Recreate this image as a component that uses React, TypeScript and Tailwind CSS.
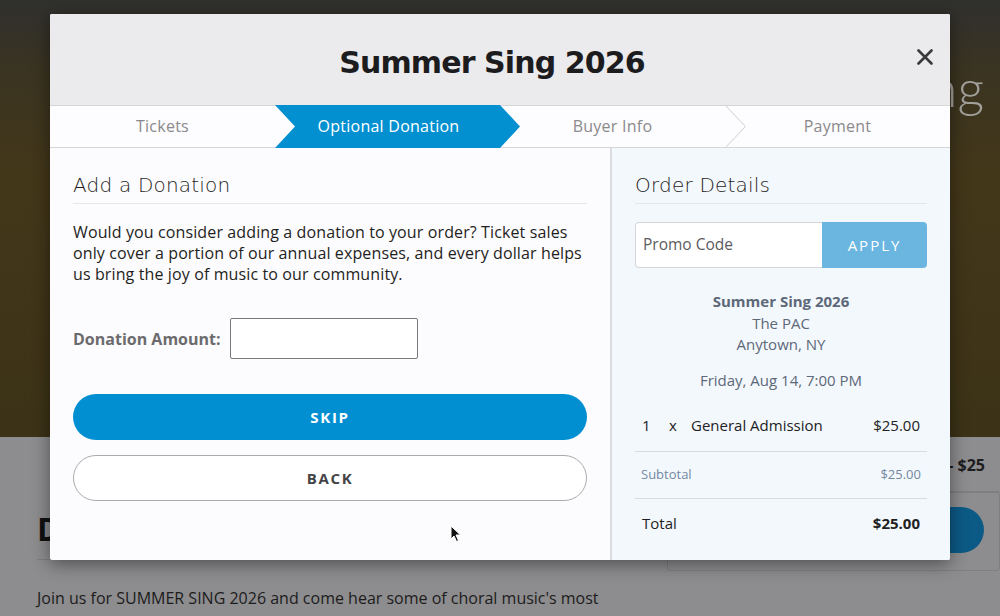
import React from "react";

const os = { fontFamily: '"Open Sans", "Noto Sans", sans-serif' };
const mont = { fontFamily: '"DejaVu Sans", "Noto Sans", sans-serif' };

function Steps() {
  return (
    <div className="relative flex h-[43px] border-y border-[#d6d6d8] bg-[#fdfcfe] text-[16px] tracking-[0.25px] text-[#8a8a8c]" style={os}>
      <div className="flex w-[225px] items-center justify-center pb-[1px]">Tickets</div>
      <div className="relative w-[225px]">
        <div
          className="absolute inset-y-[-1px] left-0 flex w-[245px] items-center justify-center bg-[#0390d1] pb-[1px] pl-[1px] pr-[21px] text-white"
          style={{ clipPath: "polygon(0 0, 225px 0, 245px 50%, 225px 100%, 0 100%, 20px 50%)" }}
        >
          <span className="pl-[2px]">Optional Donation</span>
        </div>
      </div>
      <div className="flex w-[225px] items-center justify-center pb-[1px]">Buyer Info</div>
      <div className="relative flex w-[225px] items-center justify-center pb-[1px]">
        <svg className="absolute left-0 top-[-1px]" width="22" height="43" viewBox="0 0 22 43">
          <path d="M0 0 L20.5 21.5 L0 43" fill="none" stroke="#cfcfd2" strokeWidth="1" />
        </svg>
        Payment
      </div>
    </div>
  );
}

function Modal() {
  return (
    <div className="absolute left-[50px] top-[14px] flex h-[546px] w-[900px] flex-col overflow-hidden rounded-[2px] bg-[#fcfbfe] shadow-[0_4px_18px_rgba(0,0,0,0.45)]">
      <div className="relative flex h-[91px] items-center justify-center bg-[#ebeaec]">
        <h1 className="pr-[16px] pt-[5px] text-[30px] font-bold tracking-[-0.9px] text-[#1c1c1e]" style={mont}>
          Summer Sing 2026
        </h1>
        <svg className="absolute right-[17px] top-[35px]" width="16" height="16" viewBox="0 0 16 16">
          <path d="M1.5 1.5 L14.5 14.5 M14.5 1.5 L1.5 14.5" stroke="#3a3a3c" strokeWidth="2.6" strokeLinecap="round" />
        </svg>
      </div>
      <Steps />
      <div className="flex flex-1">
        <div className="w-[562px] border-r-2 border-[#dcdce0] px-[23px] pt-[22px]" style={os}>
          <h2 className="text-[20px] font-light tracking-[0.2px] text-[#1f1f22]" style={mont}>Add a Donation</h2>
          <div className="mt-[3px] h-px bg-[#e6e6ea]" />
          <p className="mt-[18px] text-[16px] leading-[21px] tracking-[0.12px] text-[#1f1f21]">
            Would you consider adding a donation to your order? Ticket sales only cover a portion of our annual expenses, and every dollar helps us bring the joy of music to our community.
          </p>
          <div className="mt-[33px] flex items-center gap-[9px]">
            <label className="text-[16px] font-bold text-[#6b6b6d]">Donation Amount:</label>
            <div className="h-[41px] w-[188px] rounded-[2px] border border-[#7a7a7c] bg-white" />
          </div>
          <button className="mt-[35px] flex h-[46px] w-full items-center justify-center rounded-full bg-[#028fd1] text-[15px] font-bold tracking-[1.7px] text-white">
            SKIP
          </button>
          <button className="mt-[15px] flex h-[46px] w-full items-center justify-center rounded-full border border-[#aaaaac] bg-white text-[15px] font-bold tracking-[1.7px] text-[#444446]">
            BACK
          </button>
        </div>
        <div className="flex-1 bg-[#f3f8fd] px-[23px] pt-[22px]" style={os}>
          <h2 className="text-[20px] font-light tracking-[0.2px] text-[#1f1f22]" style={mont}>Order Details</h2>
          <div className="mt-[3px] h-px bg-[#e3e6ea]" />
          <div className="mt-[18px] flex h-[46px]">
            <div className="flex flex-1 items-center rounded-l-[4px] border border-r-0 border-[#d4d6da] bg-white pl-[7px] text-[15.5px] text-[#5b5b5e]">
              Promo Code
            </div>
            <button className="w-[105px] rounded-r-[4px] bg-[#6bb6e1] text-[15px] tracking-[2px] text-white">APPLY</button>
          </div>
          <div className="mt-[23px] flex flex-col items-center text-[15px] leading-[21.5px] text-[#5d6879]">
            <div className="font-bold">Summer Sing 2026</div>
            <div>The PAC</div>
            <div>Anytown, NY</div>
            <div className="mt-[14px]">Friday, Aug 14, 7:00 PM</div>
          </div>
          <div className="mt-[23px] flex px-[7px] text-[15px] text-[#222224]">
            <span className="w-[27px]">1</span>
            <span className="w-[22px]">x</span>
            <span className="flex-1">General Admission</span>
            <span>$25.00</span>
          </div>
          <div className="mt-[14px] h-px bg-[#d8dbe0]" />
          <div className="flex h-[46px] items-center justify-between px-[6px] text-[13px] text-[#7488a1]">
            <span>Subtotal</span>
            <span>$25.00</span>
          </div>
          <div className="h-px bg-[#d8dbe0]" />
          <div className="flex h-[50px] items-center justify-between px-[7px] text-[15px] text-[#1f1f21]">
            <span>Total</span>
            <span className="font-bold">$25.00</span>
          </div>
        </div>
      </div>
    </div>
  );
}

export default function App() {
  return (
    <div className="relative h-[616px] w-[1000px] overflow-hidden bg-[#8d8c8e]" style={os}>
      <div className="flex h-[437px] justify-end bg-[linear-gradient(180deg,#30302e_0%,#3b3420_18%,#43371a_40%,#3c3217_100%)] pr-[16px] pt-[48px]">
        <span className="text-[52px] font-light text-[#a2a09c]" style={{ fontFamily: '"Lato", sans-serif' }}>Summer Sing</span>
      </div>
      <div className="flex">
        <div className="w-[610px] shrink-0 pl-[37px]">
          <div className="mt-[72px] text-[32px] font-bold leading-[40px] text-[#111]">Details</div>
          <div className="mt-[10px] h-px w-[570px] bg-[#7d7c7e]" />
          <p className="mt-[26px] text-[16px] text-[#1c1c1c]">Join us for SUMMER SING 2026 and come hear some of choral music's most</p>
        </div>
        <div className="w-[390px] shrink-0 pl-[57px]">
          <div className="mt-[16px] flex justify-end border-b border-[#7f7e80] pb-[14px] pr-[15px] text-[16px] font-bold text-[#1c1c1e]">
            <span className="whitespace-nowrap">General Admission - $25</span>
          </div>
          <div className="relative h-[79px] rounded-[3px] border border-[#7f7e80]">
            <div className="absolute right-[15px] top-[14px] h-[46px] w-[78px] rounded-full bg-[#0b5a86]" />
          </div>
        </div>
      </div>
      <Modal />
      <svg className="absolute left-[450px] top-[525px]" width="12" height="18" viewBox="0 0 12 18">
        <path d="M1 1 L1 14 L4 11 L6.5 16.5 L8.5 15.5 L6 10 L10.5 10 Z" fill="#111" stroke="#fff" strokeWidth="1" />
      </svg>
    </div>
  );
}
